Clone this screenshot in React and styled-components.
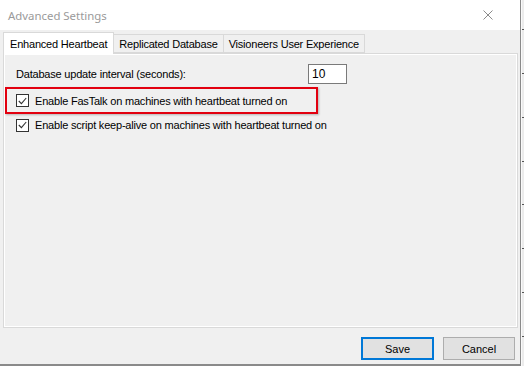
import React from "react";
import styled, { createGlobalStyle } from "styled-components";

const Global = createGlobalStyle`
  html, body { margin: 0; padding: 0; background: #f0f0f0; }
  body { width: 524px; height: 366px; overflow: hidden; }
  #root { width: 524px; height: 366px; }
`;

const Screen = styled.div`
  display: flex;
  width: 524px;
  height: 366px;
  background: #f0f0f0;
`;

const Window = styled.div`
  width: 521px;
  height: 366px;
  box-sizing: border-box;
  border-right: 1px solid #8a8a8a;
  border-bottom: 2px solid #8a8a8a;
  display: flex;
  flex-direction: column;
  background: #f0f0f0;
  font-family: "Liberation Sans", Arial, sans-serif;
  font-size: 11px;
  letter-spacing: -0.2px;
  color: #000;
`;

const Behind = styled.div`
  flex: 1;
  background: #ececec;
  border-left: 1px solid #fafafa;
  display: flex;
  flex-direction: column;
  justify-content: space-around;
  padding: 8px 0;
`;

const Tick = styled.div`
  height: 1px;
  width: 2px;
  background: #555;
`;

const TitleBar = styled.div`
  height: 30px;
  flex: none;
  background: #fff;
  display: flex;
  align-items: center;
  justify-content: space-between;
  padding: 0 27px 0 8px;
  box-sizing: border-box;
`;

const Title = styled.span`
  font-family: "Segoe UI", "Noto Sans", "Open Sans", sans-serif;
  font-size: 11.4px;
  letter-spacing: 0;
  color: #9a9a9a;
  padding-top: 1px;
`;

const Body = styled.div`
  flex: 1;
  display: flex;
  flex-direction: column;
  padding: 1px 2px 0 3px;
`;

const TabRow = styled.div`
  display: flex;
  align-items: flex-end;
  height: 22px;
  position: relative;
  z-index: 1;
`;

const Tab = styled.div`
  box-sizing: border-box;
  height: ${(p) => (p.$active ? "22px" : "19px")};
  padding: 0 ${(p) => (p.$active ? "6px" : "5px")};
  margin-bottom: ${(p) => (p.$active ? "-1px" : "0")};
  background: ${(p) => (p.$active ? "#fff" : "#f0f0f0")};
  border: 1px solid #d9d9d9;
  border-bottom: ${(p) => (p.$active ? "none" : "1px solid #d9d9d9")};
  margin-left: ${(p) => (p.$first ? "0" : "-1px")};
  display: flex;
  align-items: center;
  padding-top: ${(p) => (p.$active ? "0" : "1px")};
  white-space: nowrap;
`;

const Panel = styled.div`
  height: 275px;
  box-sizing: border-box;
  border: 1px solid #d9d9d9;
  background: #f0f0f0;
  box-shadow: inset 0 0 0 1px #fff;
  padding: 10px 12px;
  display: flex;
  flex-direction: column;
`;

const IntervalRow = styled.div`
  display: flex;
  align-items: center;
  justify-content: space-between;
  width: 331px;
  height: 20px;
`;

const NumberBox = styled.div`
  width: 39px;
  height: 20px;
  box-sizing: border-box;
  border: 1px solid #7a7a7a;
  background: #fff;
  font-size: 12px;
  letter-spacing: 0;
  padding: 2px 0 0 3px;
`;

const Highlight = styled.div`
  margin: 3px 0 0 -11px;
  width: 313px;
  height: 27px;
  box-sizing: border-box;
  border: 2px solid #e2000f;
  box-shadow: 1px 1px 2px rgba(0, 0, 0, 0.25);
  display: flex;
  align-items: center;
  padding-left: 9px;
`;

const CheckRow = styled.label`
  display: flex;
  align-items: center;
  gap: 6px;
  height: 16px;
  margin-top: ${(p) => p.$mt || 0}px;
`;

const Box = styled.span`
  width: 13px;
  height: 13px;
  box-sizing: border-box;
  border: 1px solid #333;
  background: #fff;
  display: flex;
  align-items: center;
  justify-content: center;
`;

const Footer = styled.div`
  flex: 1;
  display: flex;
  justify-content: flex-end;
  align-items: flex-start;
  gap: 9px;
  padding: 9px 3px 0 0;
`;

const Button = styled.button`
  width: ${(p) => p.$w}px;
  height: 23px;
  box-sizing: border-box;
  background: #e1e1e1;
  border: ${(p) => (p.$primary ? "2px solid #0078d7" : "1px solid #adadad")};
  font-family: "Liberation Sans", Arial, sans-serif;
  font-size: 11px;
  color: #000;
  padding: 0;
`;

const Check = () => (
  <Box>
    <svg width="9" height="8" viewBox="0 0 9 8">
      <path d="M0.8 4 L3.4 6.6 L8.2 1" fill="none" stroke="#333" strokeWidth="1.1" />
    </svg>
  </Box>
);

const CloseIcon = () => (
  <svg width="10" height="10" viewBox="0 0 10 10">
    <path d="M0.5 0.5 L9.5 9.5 M9.5 0.5 L0.5 9.5" stroke="#8a8a8a" strokeWidth="1" />
  </svg>
);

export default function App() {
  return (
    <Screen>
      <Global />
      <Window>
        <TitleBar>
          <Title>Advanced Settings</Title>
          <CloseIcon />
        </TitleBar>
        <Body>
          <TabRow>
            <Tab $active $first>Enhanced Heartbeat</Tab>
            <Tab>Replicated Database</Tab>
            <Tab>Visioneers User Experience</Tab>
          </TabRow>
          <Panel>
            <IntervalRow>
              <span>Database update interval (seconds):</span>
              <NumberBox>10</NumberBox>
            </IntervalRow>
            <Highlight>
              <CheckRow>
                <Check />
                <span>Enable FasTalk on machines with heartbeat turned on</span>
              </CheckRow>
            </Highlight>
            <CheckRow $mt={3}>
              <Check />
              <span>Enable script keep-alive on machines with heartbeat turned on</span>
            </CheckRow>
          </Panel>
          <Footer>
            <Button $primary $w={73}>Save</Button>
            <Button $w={72}>Cancel</Button>
          </Footer>
        </Body>
      </Window>
      <Behind>
        <Tick /><Tick /><Tick /><Tick /><Tick /><Tick /><Tick /><Tick />
      </Behind>
    </Screen>
  );
}
